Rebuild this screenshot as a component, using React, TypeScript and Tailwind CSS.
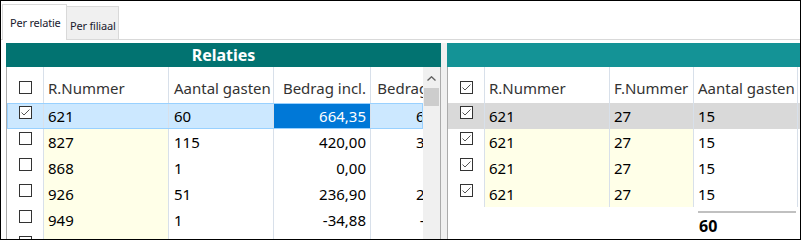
import React from "react";

const F = "font-['Noto_Sans',sans-serif]";

function Check({ checked }: { checked?: boolean }) {
  return (
    <div className="w-[13px] h-[13px] border border-[#333333] bg-white flex items-center justify-center shrink-0">
      {checked && (
        <svg width="11" height="11" viewBox="0 0 11 11">
          <polyline points="1.5,5.5 4,8 9.5,2.5" fill="none" stroke="#555555" strokeWidth="1" />
        </svg>
      )}
    </div>
  );
}

const leftRows = [
  { n: "621", a: "60", b: "664,35", c: "609,50", sel: true, checked: true },
  { n: "827", a: "115", b: "420,00", c: "385,32" },
  { n: "868", a: "1", b: "0,00", c: "0,00" },
  { n: "926", a: "51", b: "236,90", c: "217,34" },
  { n: "949", a: "1", b: "-34,88", c: "-32,00" },
  { n: "", a: "", b: "", c: "" },
];

const rightRows = [
  { sel: true },
  { sel: false },
  { sel: false },
  { sel: false },
];

const sep = "border-r border-[#d8e0ea]";

function LeftGrid() {
  return (
    <div className="w-[416px] overflow-hidden text-[15px] text-black">
      <div className="flex h-[36px] text-[#333333]">
        <div className={`w-[37px] shrink-0 ${sep} flex justify-center pt-[14px]`}>
          <Check />
        </div>
        <div className={`w-[125px] shrink-0 ${sep} pl-[4px] pt-[10px] whitespace-nowrap`}>R.Nummer</div>
        <div className={`w-[105px] shrink-0 ${sep} pl-[5px] pt-[10px] whitespace-nowrap`}>Aantal gasten</div>
        <div className={`w-[97px] shrink-0 ${sep} pr-[4px] pt-[10px] text-right whitespace-nowrap`}>Bedrag incl.</div>
        <div className={`w-[97px] shrink-0 ${sep} pr-[4px] pt-[10px] text-right whitespace-nowrap`}>Bedrag excl.</div>
      </div>
      {leftRows.map((r, i) => (
        <div
          key={i}
          className={`flex h-[26px] ${r.sel ? "bg-[#cce8ff] outline outline-1 -outline-offset-1 outline-[#99d1ff]" : ""}`}
        >
          <div className={`w-[37px] shrink-0 ${sep} flex justify-center pt-[3px]`}>
            <Check checked={r.checked} />
          </div>
          <div className={`w-[125px] shrink-0 ${sep} pl-[4px] flex items-center ${r.sel ? "" : "bg-[#ffffe8]"}`}>{r.n}</div>
          <div className={`w-[105px] shrink-0 ${sep} pl-[5px] flex items-center`}>{r.a}</div>
          <div
            className={`w-[97px] shrink-0 ${sep} pr-[4px] flex items-center justify-end ${r.sel ? "bg-[#0078d7] text-white" : ""}`}
          >
            {r.b}
          </div>
          <div className={`w-[97px] shrink-0 ${sep} pr-[4px] flex items-center justify-end`}>{r.c}</div>
        </div>
      ))}
    </div>
  );
}

function Scrollbar() {
  return (
    <div className="w-[17px] shrink-0 bg-[#f0f0f0] flex flex-col">
      <div className="h-[17px] flex justify-center pt-[9px]">
        <svg width="9" height="5" viewBox="0 0 9 5">
          <polyline points="0.5,4.5 4.5,0.8 8.5,4.5" fill="none" stroke="#606060" strokeWidth="1.4" />
        </svg>
      </div>
      <div className="mt-[4px] mx-[1px] h-[18px] bg-[#cdcdcd]" />
    </div>
  );
}

function RightGrid() {
  return (
    <div className="flex-1 text-[15px] text-black">
      <div className="flex h-[36px] text-[#333333]">
        <div className={`w-[37px] shrink-0 ${sep} flex justify-center pt-[14px]`}>
          <Check checked />
        </div>
        <div className={`w-[125px] shrink-0 ${sep} pl-[4px] pt-[10px]`}>R.Nummer</div>
        <div className={`w-[84px] shrink-0 ${sep} pl-[4px] pt-[10px] whitespace-nowrap`}>F.Nummer</div>
        <div className={`w-[104px] shrink-0 ${sep} pl-[4px] pt-[10px] whitespace-nowrap`}>Aantal gasten</div>
      </div>
      {rightRows.map((r, i) => (
        <div key={i} className={`flex h-[26px] ${r.sel ? "bg-[#d9d9d9]" : ""}`}>
          <div className={`w-[37px] shrink-0 ${sep} flex justify-center pt-[3px]`}>
            <Check checked />
          </div>
          <div className={`w-[125px] shrink-0 ${sep} pl-[4px] flex items-center ${r.sel ? "" : "bg-[#ffffe8]"}`}>621</div>
          <div className={`w-[84px] shrink-0 ${sep} pl-[4px] flex items-center ${r.sel ? "" : "bg-[#ffffe8]"}`}>27</div>
          <div className={`w-[104px] shrink-0 ${sep} pl-[4px] flex items-center`}>15</div>
        </div>
      ))}
      <div className="flex">
        <div className="w-[248px] shrink-0" />
        <div className="w-[104px] pl-[2px] pt-[4px]">
          <div className="w-[98px] h-[2px] bg-[#c0c0c0]" />
          <div className="pl-[1px] pt-[3px] font-bold text-[16px] leading-[20px]">60</div>
        </div>
      </div>
    </div>
  );
}

export default function App() {
  return (
    <div className={`${F} w-[801px] h-[240px] border border-black bg-white overflow-hidden flex flex-col`}>
      <div className="h-[39px] shrink-0 border-b border-[#d9d9d9] flex items-end pl-[1px] text-[11px] tracking-[-0.2px] text-[#1a1a2e] whitespace-nowrap">
        <div className="relative z-10 -mb-px w-[65px] h-[36px] bg-white border-l border-t border-r border-[#d9d9d9] pl-[7px] pt-[10px] leading-[16px]">
          Per relatie
        </div>
        <div className="w-[52px] h-[33px] bg-[#f0f0f0] border-t border-r border-[#d9d9d9] pl-[3px] pt-[11px] leading-[16px]">
          Per filiaal
        </div>
      </div>
      <div className="flex-1 flex pt-[3px] pl-[5px] min-h-0">
        <div className="w-[435px] shrink-0 flex flex-col">
          <div className="h-[24px] shrink-0 bg-[#027371] text-white font-bold text-[16px] flex items-center justify-center">
            Relaties
          </div>
          <div className="flex-1 flex border-l border-r border-[#ababab] min-h-0 overflow-hidden">
            <LeftGrid />
            <Scrollbar />
          </div>
        </div>
        <div className="w-[6px] shrink-0 bg-[#f0f0f0]" />
        <div className="flex-1 flex flex-col min-w-0">
          <div className="h-[24px] shrink-0 bg-[#149396]" />
          <div className="flex-1 flex border-l border-[#ababab] min-h-0 overflow-hidden">
            <RightGrid />
          </div>
        </div>
      </div>
    </div>
  );
}
